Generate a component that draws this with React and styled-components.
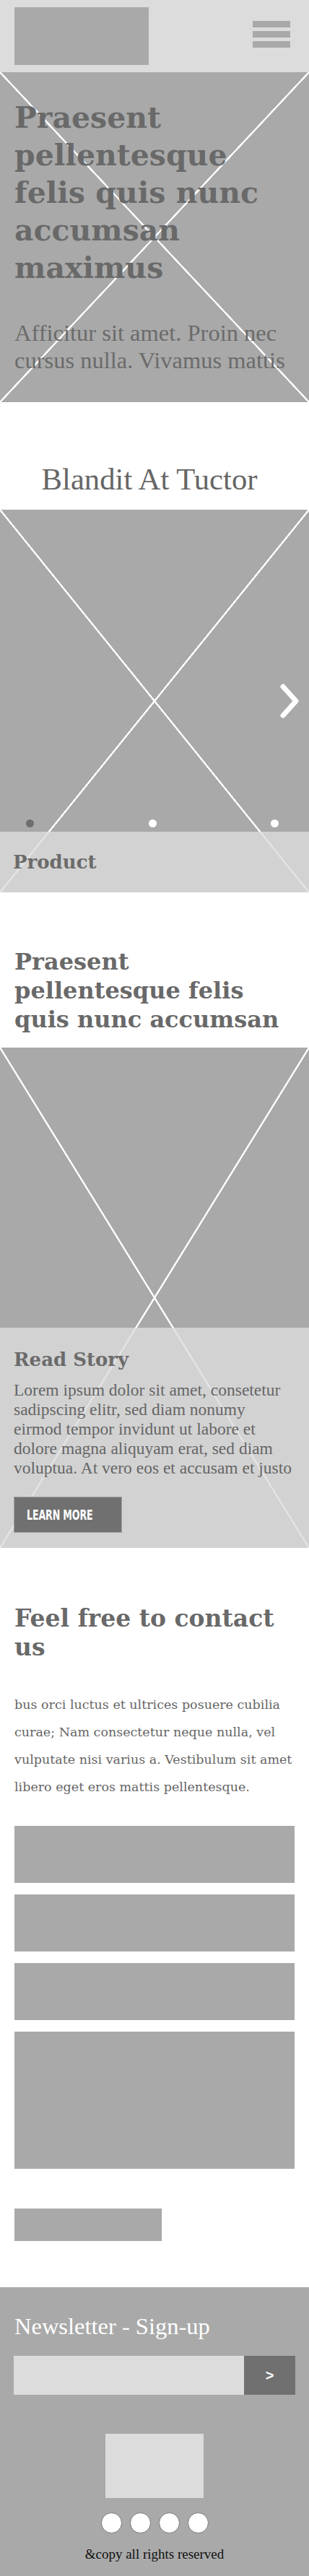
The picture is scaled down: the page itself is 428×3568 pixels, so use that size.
import React from "react";
import styled, { createGlobalStyle, css } from "styled-components";

const GlobalStyle = createGlobalStyle`
  * {
    box-sizing: border-box;
  }
  body {
    margin: 0;
    background: #fff;
    font-family: "Liberation Serif", "Times New Roman", serif;
  }
`;

// white X drawn over a grey placeholder
const crossLines = css`
  background-color: #a9a9a9;
  background-image:
    linear-gradient(to top right, transparent calc(50% - 1.4px), #fff calc(50% - 1px), #fff calc(50% + 1px), transparent calc(50% + 1.4px)),
    linear-gradient(to bottom right, transparent calc(50% - 1.4px), #fff calc(50% - 1px), #fff calc(50% + 1px), transparent calc(50% + 1.4px));
`;

const boldSerif = css`
  font-family: "DejaVu Serif", serif;
  font-weight: 700;
  color: #696969;
  margin: 0;
`;

const Page = styled.div`
  width: 428px;
`;

/* header */
const Header = styled.header`
  height: 100px;
  background: #dcdcdc;
  display: flex;
  align-items: flex-start;
  justify-content: space-between;
  padding: 10px 26px 0 20px;
`;

const Logo = styled.div`
  width: 186px;
  height: 80px;
  background: #a9a9a9;
`;

const Burger = styled.div`
  margin-top: 19px;
  width: 52px;
  display: flex;
  flex-direction: column;
  gap: 5px;

  span {
    height: 9px;
    background: #a9a9a9;
  }
`;

/* hero */
const Hero = styled.section`
  ${crossLines};
  height: 457px;
  padding: 37px 20px 0;
`;

const HeroTitle = styled.h1`
  ${boldSerif};
  font-size: 41px;
  line-height: 52px;
  max-width: 388px;
`;

const HeroText = styled.p`
  margin: 45px 0 0;
  font-size: 32.5px;
  line-height: 38px;
  color: #6b6b6b;
`;

/* carousel */
const SliderSection = styled.section`
  padding-top: 82px;
`;

const CenterTitle = styled.h2`
  margin: 0 0 17px;
  font-weight: 400;
  font-size: 42.7px;
  line-height: 50px;
  color: #666;
  text-align: center;
  padding-right: 14px;
`;

const Card = styled.div`
  ${crossLines};
  position: relative;
  height: ${(p) => p.$height}px;
  display: flex;
  flex-direction: column;
`;

const Slide = styled.div`
  flex: 1;
  display: flex;
  align-items: flex-end;
  justify-content: space-between;
  padding: 0 42px 6px 36px;
`;

const Dot = styled.span`
  width: 11px;
  height: 11px;
  border-radius: 50%;
  background: ${(p) => (p.$active ? "#6e6e6e" : "#fff")};
`;

const Next = styled.svg`
  position: absolute;
  right: 12px;
  top: 50%;
  transform: translateY(-50%);
`;

const Caption = styled.div`
  background: rgba(220, 220, 220, 0.8);
  height: ${(p) => p.$height}px;
  padding: ${(p) => p.$pad};
  display: flex;
  flex-direction: column;
  justify-content: ${(p) => (p.$center ? "center" : "flex-start")};
`;

const CaptionTitle = styled.h3`
  ${boldSerif};
  font-size: 26px;
  line-height: 34px;
  color: #6b6b6b;
`;

/* story */
const StorySection = styled.section`
  padding-top: 76px;
`;

const SectionTitle = styled.h2`
  ${boldSerif};
  font-size: ${(p) => p.$size}px;
  line-height: 40px;
  max-width: ${(p) => p.$max}px;
  margin: 0 0 ${(p) => p.$after}px 20px;
`;

const StoryText = styled.p`
  margin: 12px 0 0;
  font-size: 23.5px;
  line-height: 27px;
  color: #666;
`;

const LearnMore = styled.button`
  margin-top: 26px;
  width: 150px;
  height: 50px;
  background: #707070;
  border: 1px solid #a0a0a0;
  padding: 0 0 0 17px;
  text-align: left;
  cursor: pointer;

  span {
    display: inline-block;
    font-family: "Liberation Sans Narrow", "DejaVu Sans Condensed", "Liberation Sans", sans-serif;
    font-weight: 700;
    font-size: 19px;
    color: #fff;
    transform: scaleX(0.74);
    transform-origin: left center;
    letter-spacing: -0.2px;
  }
`;

/* contact */
const ContactSection = styled.section`
  padding: 78px 0 64px;
`;

const ContactText = styled.p`
  margin: 0 12px 35px 20px;
  font-family: "DejaVu Serif", serif;
  font-size: 17.5px;
  line-height: 38px;
  color: #666;
`;

const Form = styled.div`
  margin: 0 20px;
  display: flex;
  flex-direction: column;
  gap: 16px;
`;

const Field = styled.div`
  height: ${(p) => p.$height}px;
  background: #a9a9a9;
`;

const Submit = styled.div`
  margin: 55px 0 0 20px;
  width: 204px;
  height: 45px;
  background: #a9a9a9;
`;

/* footer */
const Footer = styled.footer`
  background: #a9a9a9;
  height: 400px;
  padding: 35px 19px 0;
  display: flex;
  flex-direction: column;
`;

const NewsTitle = styled.h2`
  margin: 0;
  font-weight: 400;
  font-size: 32.5px;
  line-height: 38px;
  color: #fff;
  padding-left: 1px;
`;

const SignupRow = styled.div`
  margin-top: 22px;
  display: flex;
  height: 54px;
`;

const EmailInput = styled.div`
  flex: 1;
  background: #dcdcdc;
`;

const SendButton = styled.button`
  width: 71px;
  border: none;
  background: #707070;
  color: #fff;
  font-family: "Liberation Sans", Arial, sans-serif;
  font-weight: 700;
  font-size: 20px;
  padding: 0;
`;

const FooterLogo = styled.div`
  align-self: center;
  margin-top: 54px;
  width: 136px;
  height: 89px;
  background: #dcdcdc;
`;

const Socials = styled.div`
  margin-top: 20px;
  display: flex;
  justify-content: center;
  gap: 11px;
`;

const Social = styled.span`
  width: 29px;
  height: 29px;
  border-radius: 50%;
  background: #fff;
  border: 1px solid #777;
`;

const Copy = styled.p`
  margin: 18px 0 0;
  text-align: center;
  font-size: 19px;
  line-height: 22px;
  color: #111;
`;

export default function App() {
  return (
    <Page>
      <GlobalStyle />
      <Header>
        <Logo />
        <Burger>
          <span />
          <span />
          <span />
        </Burger>
      </Header>

      <Hero>
        <HeroTitle>Praesent pellentesque felis quis nunc accumsan maximus</HeroTitle>
        <HeroText>Afficitur sit amet. Proin nec cursus nulla. Vivamus mattis</HeroText>
      </Hero>

      <SliderSection>
        <CenterTitle>Blandit At Tuctor</CenterTitle>
        <Card $height={530}>
          <Slide>
            <Dot $active />
            <Dot />
            <Dot />
          </Slide>
          <Caption $height={84} $pad="0 18px" $center>
            <CaptionTitle>Product</CaptionTitle>
          </Caption>
          <Next width="30" height="52" viewBox="0 0 30 52">
            <polyline points="6,6 24,26 6,46" fill="none" stroke="#fff" strokeWidth="7" strokeLinecap="round" strokeLinejoin="round" />
          </Next>
        </Card>
      </SliderSection>

      <StorySection>
        <SectionTitle $size={32} $max={375} $after={19}>
          Praesent pellentesque felis quis nunc accumsan
        </SectionTitle>
        <Card $height={693}>
          <Slide />
          <Caption $height={305} $pad="27px 19px 21px 19px">
            <CaptionTitle>Read Story</CaptionTitle>
            <StoryText>
              Lorem ipsum dolor sit amet, consetetur sadipscing elitr, sed diam nonumy eirmod tempor invidunt ut labore et dolore magna aliquyam erat, sed diam voluptua. At vero eos et accusam et justo
            </StoryText>
            <LearnMore>
              <span>LEARN MORE</span>
            </LearnMore>
          </Caption>
        </Card>
      </StorySection>

      <ContactSection>
        <SectionTitle $size={33} $max={365} $after={40}>
          Feel free to contact us
        </SectionTitle>
        <ContactText>
          bus orci luctus et ultrices posuere cubilia curae; Nam consectetur neque nulla, vel vulputate nisi varius a. Vestibulum sit amet libero eget eros mattis pellentesque.
        </ContactText>
        <Form>
          <Field $height={79} />
          <Field $height={79} />
          <Field $height={79} />
          <Field $height={190} />
        </Form>
        <Submit />
      </ContactSection>

      <Footer>
        <NewsTitle>Newsletter - Sign-up</NewsTitle>
        <SignupRow>
          <EmailInput />
          <SendButton>&gt;</SendButton>
        </SignupRow>
        <FooterLogo />
        <Socials>
          <Social />
          <Social />
          <Social />
          <Social />
        </Socials>
        <Copy>&amp;copy all rights reserved</Copy>
      </Footer>
    </Page>
  );
}
